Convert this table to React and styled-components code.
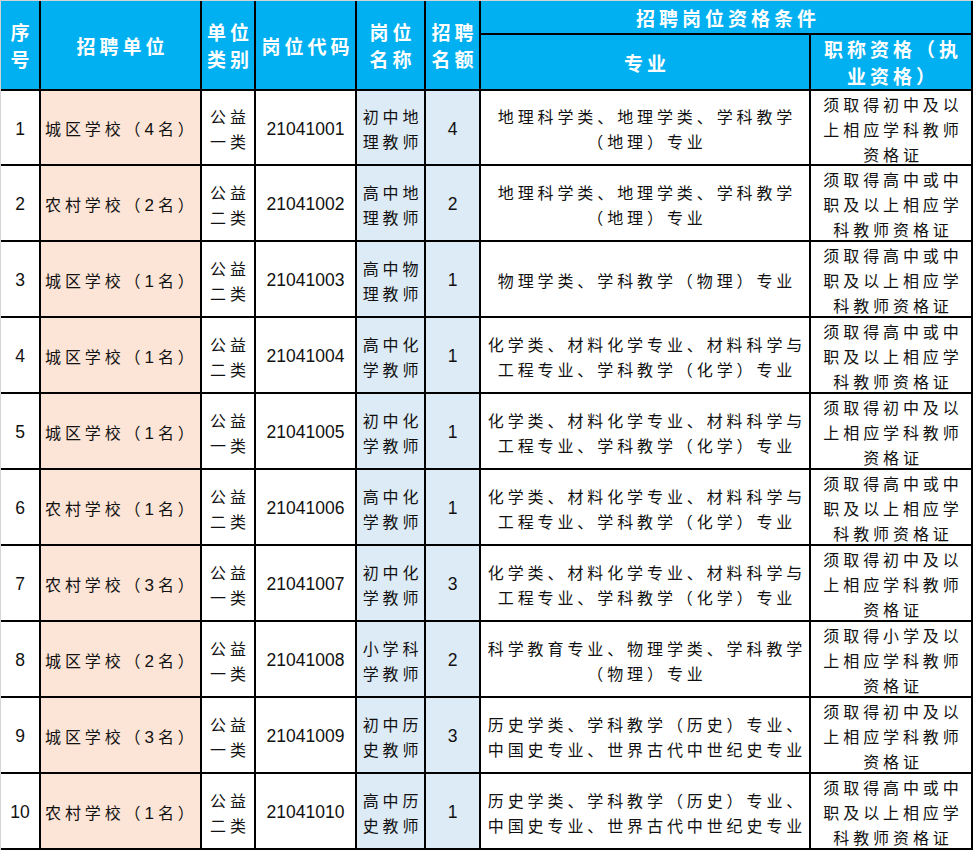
import React from 'react';
import styled, { createGlobalStyle } from 'styled-components';

const GlobalStyle = createGlobalStyle`
    html, body {
        margin: 0;
        padding: 0;
        background: #fff;
    }
`

const Sheet = styled.div`
    display: grid;
    grid-template-columns: 38px 159px 52px 99px 67px 53px 328px 160px;
    grid-template-rows: 32px 54px 73px repeat(9, 74px);
    gap: 2px;
    width: fit-content;
    padding: 0 2px 2px 0;
    background: #000;
    border-top: 1px solid #d4d4d4;
    border-left: 1px solid #d4d4d4;
`

const HeadCell = styled.div`
    display: flex;
    align-items: center;
    justify-content: center;
    grid-row: ${p => p.$rows || 'auto'};
    grid-column: ${p => p.$cols || 'auto'};
    padding-left: 4px;
    background: #00b0f0;
    color: #fff;
    font-family: "Noto Sans CJK SC", sans-serif;
    font-size: 19px;
    font-weight: 700;
    line-height: 27px;
    letter-spacing: 4px;
    text-align: center;
`

const Cell = styled.div`
    display: flex;
    align-items: center;
    justify-content: ${p => (p.$left ? 'flex-start' : 'center')};
    padding-left: ${p => (p.$left ? '4px' : '4px')};
    padding-top: 3px;
    overflow: hidden;
    background: ${p => p.$bg || '#fff'};
    color: #111;
    font-family: "Noto Sans CJK SC", sans-serif;
    font-size: 16px;
    line-height: 25px;
    letter-spacing: 3.9px;
    text-align: center;
    white-space: nowrap;
`

const Num = styled(Cell)`
    padding-left: 0;
    font-family: "Liberation Sans", "Noto Sans CJK SC", sans-serif;
    font-size: 17.5px;
    letter-spacing: 0;
`

const Unit = styled.span`
    & > b {
        font-family: "Liberation Sans", sans-serif;
        font-size: 17px;
        font-weight: 400;
    }
`

const PEACH = '#fce4d6';
const ICE = '#ddebf7';

const geo = ['地理科学类、地理学类、学科教学', '（地理）专业'];
const chem = ['化学类、材料化学专业、材料科学与', '工程专业、学科教学（化学）专业'];
const hist = ['历史学类、学科教学（历史）专业、', '中国史专业、世界古代中世纪史专业'];
const junior = ['须取得初中及以', '上相应学科教师', '资格证'];
const senior = ['须取得高中或中', '职及以上相应学', '科教师资格证'];

const rows = [
    { area: '城区', n: 4, kind: '一', code: '21041001', post: ['初中地', '理教师'], major: geo, cert: junior },
    { area: '农村', n: 2, kind: '二', code: '21041002', post: ['高中地', '理教师'], major: geo, cert: senior },
    { area: '城区', n: 1, kind: '二', code: '21041003', post: ['高中物', '理教师'], major: ['物理学类、学科教学（物理）专业'], cert: senior },
    { area: '城区', n: 1, kind: '二', code: '21041004', post: ['高中化', '学教师'], major: chem, cert: senior },
    { area: '城区', n: 1, kind: '一', code: '21041005', post: ['初中化', '学教师'], major: chem, cert: junior },
    { area: '农村', n: 1, kind: '二', code: '21041006', post: ['高中化', '学教师'], major: chem, cert: senior },
    { area: '农村', n: 3, kind: '一', code: '21041007', post: ['初中化', '学教师'], major: chem, cert: junior },
    { area: '城区', n: 2, kind: '一', code: '21041008', post: ['小学科', '学教师'], major: ['科学教育专业、物理学类、学科教学', '（物理）专业'], cert: ['须取得小学及以', '上相应学科教师', '资格证'] },
    { area: '城区', n: 3, kind: '一', code: '21041009', post: ['初中历', '史教师'], major: hist, cert: junior },
    { area: '农村', n: 1, kind: '二', code: '21041010', post: ['高中历', '史教师'], major: hist, cert: senior },
];

const Lines = ({ items }) => (
    <div>
        {items.map((t, i) => (
            <React.Fragment key={i}>
                {i > 0 && <br />}
                {t}
            </React.Fragment>
        ))}
    </div>
)

const App = () => {
    return (
        <>
            <GlobalStyle />
            <Sheet>
                <HeadCell $rows="1 / span 2"><Lines items={['序', '号']} /></HeadCell>
                <HeadCell $rows="1 / span 2">招聘单位</HeadCell>
                <HeadCell $rows="1 / span 2"><Lines items={['单位', '类别']} /></HeadCell>
                <HeadCell $rows="1 / span 2">岗位代码</HeadCell>
                <HeadCell $rows="1 / span 2"><Lines items={['岗位', '名称']} /></HeadCell>
                <HeadCell $rows="1 / span 2"><Lines items={['招聘', '名额']} /></HeadCell>
                <HeadCell $cols="7 / span 2">招聘岗位资格条件</HeadCell>
                <HeadCell>专业</HeadCell>
                <HeadCell><Lines items={['职称资格（执', '业资格）']} /></HeadCell>

                {rows.map((r, i) => (
                    <React.Fragment key={r.code}>
                        <Num>{i + 1}</Num>
                        <Cell $left $bg={PEACH}>
                            <Unit>{r.area}学校（<b>{r.n}</b>名）</Unit>
                        </Cell>
                        <Cell><Lines items={['公益', r.kind + '类']} /></Cell>
                        <Num>{r.code}</Num>
                        <Cell $bg={ICE}><Lines items={r.post} /></Cell>
                        <Num $bg={ICE}>{r.n}</Num>
                        <Cell><Lines items={r.major} /></Cell>
                        <Cell><Lines items={r.cert} /></Cell>
                    </React.Fragment>
                ))}
            </Sheet>
        </>
    )
}

export default App;
